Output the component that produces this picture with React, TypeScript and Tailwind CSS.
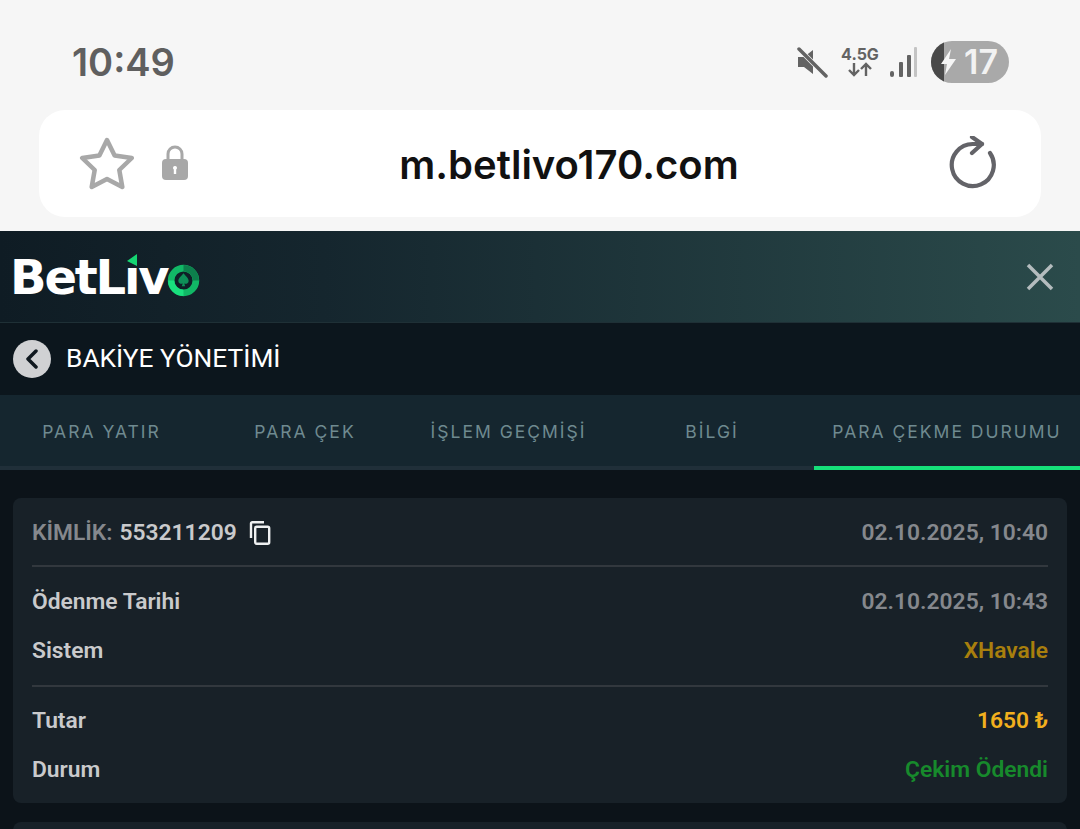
function StatusBar() {
  return (
    <div className="h-[110px] shrink-0 pl-[72px] pr-[71px] pt-[41px] flex justify-between items-start">
      <span className="font-['Inter',sans-serif] text-[38px] leading-[42px] font-semibold text-[#5f5f5f]">10:49</span>
      <div className="flex items-center h-[42px]">
        <svg width="32" height="32" viewBox="0 0 32 32" className="mr-[13px]">
          <path d="M2 11h6l9-7v24l-9-7H2z" fill="#636363" />
          <path d="M3 3l27 27" stroke="#f6f6f6" strokeWidth="5" />
          <path d="M3 3l27 27" stroke="#636363" strokeWidth="3.500" strokeLinecap="round" />
        </svg>
        <div className="w-[38px] flex flex-col items-center font-['Inter',sans-serif] text-[#636363] mr-[10px]">
          <span className="text-[16px] leading-[15px] font-bold">4.5G</span>
          <svg width="26" height="15" viewBox="0 0 26 15" fill="none" stroke="#636363" strokeWidth="2.400">
            <path d="M7 1v12M2 8l5 5 5-5M19 14V2M14 7l5-5 5 5" />
          </svg>
        </div>
        <svg width="28" height="30" viewBox="0 0 28 30" className="mr-[14px]">
          <rect x="1" y="24" width="4" height="6" rx="2" fill="#636363" />
          <rect x="10" y="15" width="4" height="15" rx="1" fill="#636363" />
          <rect x="18" y="8" width="4" height="22" rx="1" fill="#636363" />
          <rect x="25" y="0" width="3" height="30" rx="1" fill="#c4c4c4" />
        </svg>
        <div className="relative w-[78px] h-[42px] rounded-full bg-[#a9a9a9] overflow-hidden flex items-center">
          <div className="absolute left-0 top-0 bottom-0 w-[13px] bg-[#494949]" />
          <svg width="18" height="26" viewBox="0 0 18 26" className="relative ml-[9px]">
            <path d="M11 0L1 15h6l-2 11 11-16H9z" fill="#f6f6f6" />
          </svg>
          <span className="relative ml-[6px] font-['Inter',sans-serif] text-[34px] leading-none font-semibold text-[#f2f2f2]">17</span>
        </div>
      </div>
    </div>
  );
}

function AddressBar() {
  return (
    <div className="mx-[39px] h-[107px] shrink-0 bg-white rounded-[26px] flex items-center pl-[40px] pr-[43px]">
      <svg width="56" height="54" viewBox="0 0 56 54" fill="none" stroke="#a8a8a8" strokeWidth="4.500" strokeLinejoin="round">
        <path d="M28 3l7.600 15.600 17.200 2.400-12.500 12 3 17L28 42l-15.300 8 3-17L3.200 21l17.200-2.400z" />
      </svg>
      <svg width="28" height="36" viewBox="0 0 28 36" className="ml-[26px] mt-[-2px]">
        <path d="M7 16V9a7 7 0 0114 0v7" fill="none" stroke="#a8a8a8" strokeWidth="3" />
        <rect x="1" y="14" width="26" height="21" rx="4" fill="#a8a8a8" />
        <path d="M14 21a2 2 0 011.200 3.600V29h-2.400v-4.400A2 2 0 0114 21z" fill="#fff" />
      </svg>
      <div className="flex-1 text-center font-['Inter',sans-serif] text-[40px] leading-none font-semibold text-[#111] pl-[24px] pr-[23px] pt-[2px]">
        m.betlivo170.com
      </div>
      <svg width="50" height="56" viewBox="0 0 50 56" fill="none" stroke="#636368" strokeWidth="4.200" strokeLinecap="round" strokeLinejoin="round">
        <path d="M42 17A21 21 0 1 1 25 8h9" />
        <path d="M24 1l10 7-10 9" />
      </svg>
    </div>
  );
}

function Logo() {
  return (
    <div className="flex items-center font-['DejaVu_Sans',sans-serif] text-[48px] leading-none font-bold text-white tracking-[-2.200px]">
      <span>BetL</span>
      <span className="relative">
        ı
        <svg width="11" height="13" viewBox="0 0 11 13" className="absolute left-[3px] top-[1px]">
          <path d="M10 0v12L0 7z" fill="#15d572" />
        </svg>
      </span>
      <span>v</span>
      <svg width="33" height="33" viewBox="0 0 32 32" className="mt-[7px]">
        <circle cx="16" cy="16" r="12" fill="#0f1f27" stroke="#11b866" strokeWidth="6.500" />
        <path d="M16 1a15 15 0 0115 15h-6a9 9 0 00-9-9z" fill="#0d7f4c" />
        <path d="M16 31A15 15 0 011 16h6a9 9 0 009 9z" fill="#19e07e" />
        <path d="M16 9c2 3 5 4.500 5 7.500a2.800 2.800 0 01-4.300 2.300l1 2.700h-3.400l1-2.700A2.800 2.800 0 0111 16.500C11 13.500 14 12 16 9z" fill="#0e8f58" />
      </svg>
    </div>
  );
}

const tabs = [
  { label: 'PARA YATIR', w: 'w-[203px]' },
  { label: 'PARA ÇEK', w: 'w-[204px]' },
  { label: 'İŞLEM GEÇMİŞİ', w: 'w-[203px]' },
  { label: 'BİLGİ', w: 'w-[204px]' },
  { label: 'PARA ÇEKME DURUMU', w: 'w-[266px]', active: true },
];

function Tabs() {
  return (
    <div className="h-[75px] shrink-0 bg-[#15262f] flex">
      {tabs.map((t) => (
        <div
          key={t.label}
          className={`${t.w} flex items-center justify-center border-b-4 pt-[4px] font-['Inter',sans-serif] text-[17.500px] tracking-[2px] whitespace-nowrap text-[#6f8a90] ${t.active ? 'border-[#16e07a]' : 'border-[#202f39]'}`}
        >
          {t.label}
        </div>
      ))}
    </div>
  );
}

function CopyIcon() {
  return (
    <svg width="22" height="24" viewBox="0 0 22 24" fill="none" stroke="#eef0f1" strokeWidth="2.400" className="ml-[12px]">
      <path d="M2 17V2.500a1.300 1.300 0 011.300-1.300H15" />
      <rect x="6.200" y="5.700" width="14" height="17" rx="1.500" />
    </svg>
  );
}

function Row({ label, value, valueClass }: { label: string; value: string; valueClass: string }) {
  return (
    <div className="h-[49px] flex items-center justify-between">
      <span className="text-[#c9cacc]">{label}</span>
      <span className={valueClass}>{value}</span>
    </div>
  );
}

export default function App() {
  return (
    <div className="w-[1080px] h-[829px] overflow-hidden bg-[#f6f6f6] flex flex-col">
      <StatusBar />
      <AddressBar />
      <div className="h-[14px] shrink-0" />
      <div className="h-[92px] shrink-0 bg-gradient-to-r from-[#0f1c24] via-[#15262e] via-30% to-[#2b4b4b] border-b border-[#1f3036] flex items-center justify-between pl-[10px] pr-[25px]">
        <Logo />
        <svg width="30" height="30" viewBox="0 0 30 30" stroke="#b4bcbe" strokeWidth="3.500">
          <path d="M3 3l24 24M27 3L3 27" />
        </svg>
      </div>
      <div className="h-[72px] shrink-0 bg-[#0c161d] flex items-center pl-[13px] gap-[15px]">
        <div className="w-[38px] h-[38px] rounded-full bg-[#d0d1d3] flex items-center justify-center">
          <svg width="14" height="20" viewBox="0 0 14 20" fill="none" stroke="#10191f" strokeWidth="3.500" strokeLinecap="round" strokeLinejoin="round">
            <path d="M11 2L3 10l8 8" />
          </svg>
        </div>
        <span className="font-['Roboto',sans-serif] text-[26.300px] text-white">BAKİYE YÖNETİMİ</span>
      </div>
      <Tabs />
      <div className="flex-1 min-h-0 bg-[#0c1319] px-[13px] pt-[28px] font-['Roboto',sans-serif] text-[22.800px] font-semibold">
        <div className="bg-[#182128] rounded-[8px] px-[19px] h-[305px]">
          <div className="h-[69px] pt-[3px] flex items-center justify-between border-b-2 border-[#32383e]">
            <div className="flex items-center">
              <span className="text-[#85888d]">KİMLİK:</span>
              <span className="text-[#c9cacc] ml-[7px]">553211209</span>
              <CopyIcon />
            </div>
            <span className="text-[#85888d]">02.10.2025, 10:40</span>
          </div>
          <div className="pt-[11px] pb-[9px] border-b-2 border-[#32383e]">
            <Row label="Ödenme Tarihi" value="02.10.2025, 10:43" valueClass="text-[#85888d]" />
            <Row label="Sistem" value="XHavale" valueClass="text-[#a87f0d]" />
          </div>
          <div className="pt-[10px]">
            <Row label="Tutar" value="1650 ₺" valueClass="text-[#f2b01e]" />
            <Row label="Durum" value="Çekim Ödendi" valueClass="text-[#178a2c]" />
          </div>
        </div>
        <div className="bg-[#182128] rounded-[8px] h-[60px] mt-[19px]" />
      </div>
    </div>
  );
}
